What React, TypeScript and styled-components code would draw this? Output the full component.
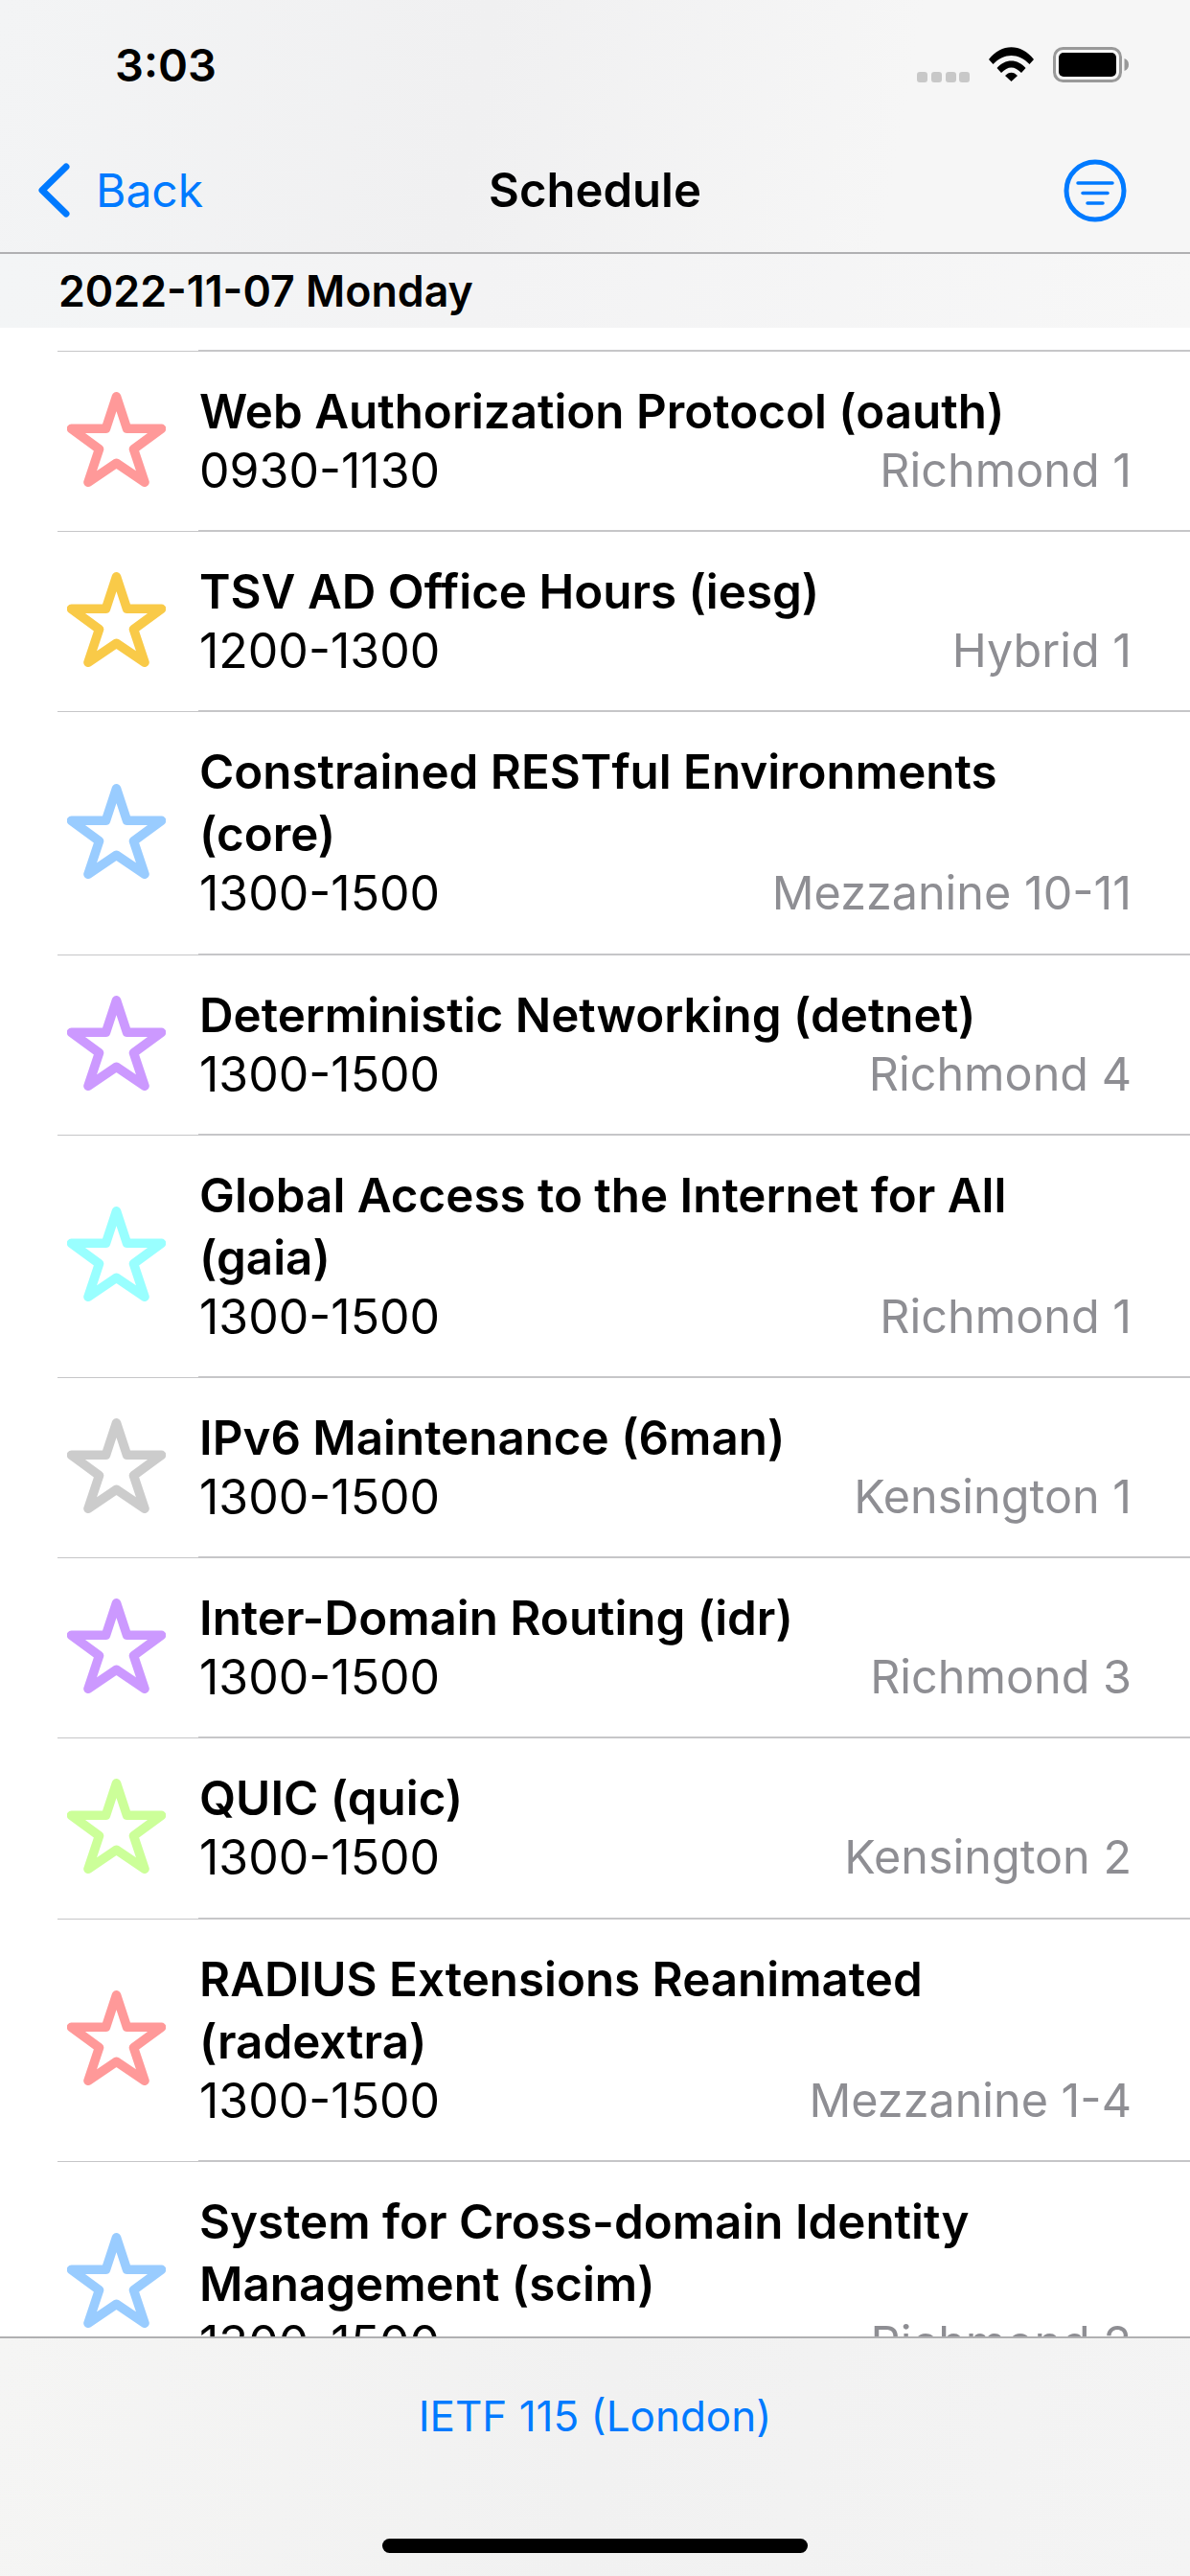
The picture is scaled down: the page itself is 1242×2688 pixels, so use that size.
import styled, { createGlobalStyle } from "styled-components";

const SESSIONS = [
  { title: ["Web Authorization Protocol (oauth)"], time: "0930-1130", room: "Richmond 1", color: "#ff9999" },
  { title: ["TSV AD Office Hours (iesg)"], time: "1200-1300", room: "Hybrid 1", color: "#f9ca48" },
  { title: ["Constrained RESTful Environments", "(core)"], time: "1300-1500", room: "Mezzanine 10-11", color: "#99ccff" },
  { title: ["Deterministic Networking (detnet)"], time: "1300-1500", room: "Richmond 4", color: "#cc99ff" },
  { title: ["Global Access to the Internet for All", "(gaia)"], time: "1300-1500", room: "Richmond 1", color: "#99ffff" },
  { title: ["IPv6 Maintenance (6man)"], time: "1300-1500", room: "Kensington 1", color: "#cccccc" },
  { title: ["Inter-Domain Routing (idr)"], time: "1300-1500", room: "Richmond 3", color: "#cc99ff" },
  { title: ["QUIC (quic)"], time: "1300-1500", room: "Kensington 2", color: "#ccff99" },
  { title: ["RADIUS Extensions Reanimated", "(radextra)"], time: "1300-1500", room: "Mezzanine 1-4", color: "#ff9999" },
  { title: ["System for Cross-domain Identity", "Management (scim)"], time: "1300-1500", room: "Richmond 2", color: "#99ccff" },
];

const GlobalStyle = createGlobalStyle`
  * { box-sizing: border-box; }
  html, body { margin: 0; background: #fff; }
  body { font-family: Inter, "Liberation Sans", sans-serif; color: #000; }
`;

const Screen = styled.div`
  width: 1242px;
  height: 2688px;
  display: flex;
  flex-direction: column;
  overflow: hidden;
`;

const TopBar = styled.header`
  height: 265px;
  flex: none;
  background: linear-gradient(100deg, #f3f4f5 0%, #f0f0f1 40%, #f6f6f6 75%, #f6f6f6 100%);
  border-bottom: 2px solid #b0b0b2;
`;

const StatusBar = styled.div`
  height: 132px;
  display: flex;
  align-items: flex-start;
  justify-content: space-between;
  padding: 44px 64px 0 120px;
`;

const Clock = styled.span`
  font-size: 47px;
  font-weight: 600;
  line-height: 48px;
`;

const StatusIcons = styled.div`
  display: flex;
  align-items: flex-start;
  gap: 20px;
  padding-top: 5px;
`;

const NavBar = styled.nav`
  height: 131px;
  display: grid;
  grid-template-columns: 1fr auto 1fr;
  align-items: center;
  padding: 2px 40px 0;
`;

const BackLink = styled.div`
  display: flex;
  align-items: center;
  gap: 27px;
  color: #007aff;
  font-size: 48px;
`;

const NavTitle = styled.div`
  font-size: 49px;
  font-weight: 600;
`;

const NavAction = styled.div`
  display: flex;
  justify-content: flex-end;
  padding-right: 26px;
`;

const SectionHeader = styled.div`
  height: 77px;
  flex: none;
  display: flex;
  align-items: center;
  padding-left: 61px;
  background: linear-gradient(100deg, #f3f5f6 0%, #f3f3f4 40%, #f7f7f7 100%);
  font-size: 44.7px;
  font-weight: 600;
`;

const List = styled.main`
  flex: 1;
  min-height: 0;
  overflow: hidden;
  padding-top: 23px;
`;

const Row = styled.div`
  margin-left: 60px;
`;

const Divider = styled.div`
  height: 2px;
  display: flex;
  align-items: flex-end;
`;

const DividerInset = styled.div`
  width: 147px;
  height: 1px;
  background: #c6c6c8;
`;

const DividerRule = styled.div`
  flex: 1;
  height: 2px;
  background: #c6c6c8;
`;

const RowBody = styled.div`
  display: grid;
  grid-template-columns: 148px 1fr;
  padding: 30px 0 33.2px;
`;

const StarCell = styled.div`
  display: flex;
  align-items: center;
  margin-left: 10px;
`;

const Content = styled.div`
  min-width: 0;
  padding-right: 61px;
`;

const Title = styled.div`
  font-size: 49.3px;
  font-weight: 600;
  line-height: 65px;
  white-space: nowrap;
`;

const Meta = styled.div`
  display: flex;
  justify-content: space-between;
  font-size: 50px;
  line-height: 58px;
`;

const Room = styled.span`
  color: #8e8e93;
  font-size: 48.5px;
`;

const Footer = styled.footer`
  height: 250px;
  flex: none;
  display: flex;
  flex-direction: column;
  align-items: center;
  background: linear-gradient(100deg, #f5f5f4 0%, #f1f1f1 50%, #f4f4f4 100%);
  border-top: 2px solid #b0b0b2;
  padding-top: 51px;
`;

const FooterLink = styled.div`
  color: #007aff;
  font-size: 44px;
  line-height: 60px;
`;

const HomeIndicator = styled.div`
  width: 444px;
  height: 15px;
  margin-top: 98px;
  border-radius: 8px;
  background: #000;
`;

function Star({ color }: { color: string }) {
  return (
    <svg width="103" height="99" viewBox="0 0 103 99">
      <path
        d="M51.5 4.8 L62.5 38.3 L98.5 38.3 L69.5 59.7 L81 94.2 L51.5 74.3 L22 94.2 L33.5 59.7 L4.5 38.3 L40.5 38.3 Z"
        fill="none"
        stroke={color}
        strokeWidth="9.6"
        strokeLinejoin="round"
      />
    </svg>
  );
}

function WifiIcon() {
  return (
    <svg width="47" height="36" viewBox="0 0 47 36">
      <path d="M0 13 C13 -4 34 -4 47 13 L42.5 18 C31 6 16 6 4.5 18 Z" fill="#000" />
      <path d="M8.5 22 C17 12 30 12 38.5 22 L34 27 C27 19.5 20 19.5 13 27 Z" fill="#000" />
      <path d="M17 30 C21 25.5 26 25.5 30 30 L23.5 36 Z" fill="#000" />
    </svg>
  );
}

function BatteryIcon() {
  return (
    <svg width="79" height="37" viewBox="0 0 79 37">
      <rect x="1.5" y="1.5" width="69" height="34" rx="9" fill="none" stroke="#999" strokeWidth="3" />
      <rect x="6" y="6" width="60" height="25" rx="5" fill="#000" />
      <path d="M74.5 12 C77.5 13 79 15.5 79 18.5 C79 21.5 77.5 24 74.5 25 Z" fill="#999" />
    </svg>
  );
}

function SignalDots() {
  return (
    <svg width="55" height="37" viewBox="0 0 55 37">
      {[0, 15, 30, 44].map((x) => (
        <rect key={x} x={x} y="26" width="11" height="11" rx="3" fill="#c8c8c8" />
      ))}
    </svg>
  );
}

export default function App() {
  return (
    <>
      <GlobalStyle />
      <Screen>
        <TopBar>
          <StatusBar>
            <Clock>3:03</Clock>
            <StatusIcons>
              <SignalDots />
              <WifiIcon />
              <BatteryIcon />
            </StatusIcons>
          </StatusBar>
          <NavBar>
            <BackLink>
              <svg width="33" height="57" viewBox="0 0 33 57">
                <path d="M29 4 L4 28.5 L29 53" fill="none" stroke="#007aff" strokeWidth="7" strokeLinecap="round" strokeLinejoin="round" />
              </svg>
              Back
            </BackLink>
            <NavTitle>Schedule</NavTitle>
            <NavAction>
              <svg width="66" height="66" viewBox="0 0 66 66" fill="none" stroke="#007aff" strokeLinecap="round">
                <circle cx="33" cy="33" r="30" strokeWidth="5" />
                <path d="M15 25 H51" strokeWidth="3.5" />
                <path d="M20 35.5 H46" strokeWidth="3.5" />
                <path d="M25 46 H41" strokeWidth="3.5" />
              </svg>
            </NavAction>
          </NavBar>
        </TopBar>
        <SectionHeader>2022-11-07 Monday</SectionHeader>
        <List>
          {SESSIONS.map((s) => (
            <Row key={s.title[0]}>
              <Divider>
                <DividerInset />
                <DividerRule />
              </Divider>
              <RowBody>
                <StarCell>
                  <Star color={s.color} />
                </StarCell>
                <Content>
                  {s.title.map((line) => (
                    <Title key={line}>{line}</Title>
                  ))}
                  <Meta>
                    <span>{s.time}</span>
                    <Room>{s.room}</Room>
                  </Meta>
                </Content>
              </RowBody>
            </Row>
          ))}
        </List>
        <Footer>
          <FooterLink>IETF 115 (London)</FooterLink>
          <HomeIndicator />
        </Footer>
      </Screen>
    </>
  );
}
